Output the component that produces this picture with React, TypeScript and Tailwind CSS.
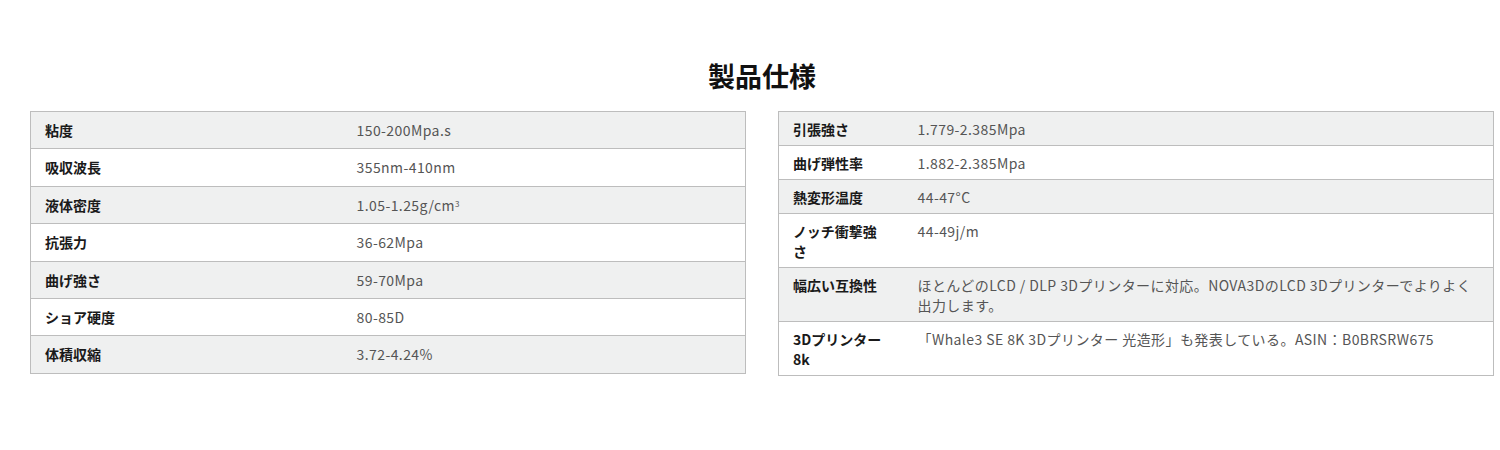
const font = { fontFamily: '"Noto Sans CJK JP", "Noto Sans", sans-serif' };

type Row = { label: string; value: React.ReactNode };

const leftRows: Row[] = [
  { label: '粘度', value: '150-200Mpa.s' },
  { label: '吸収波長', value: '355nm-410nm' },
  {
    label: '液体密度',
    value: (
      <>
        1.05-1.25g/cm<sup className="text-[8px]">3</sup>
      </>
    ),
  },
  { label: '抗張力', value: '36-62Mpa' },
  { label: '曲げ強さ', value: '59-70Mpa' },
  { label: 'ショア硬度', value: '80-85D' },
  { label: '体積収縮', value: '3.72-4.24%' },
];

const rightRows: Row[] = [
  { label: '引張強さ', value: '1.779-2.385Mpa' },
  { label: '曲げ弾性率', value: '1.882-2.385Mpa' },
  { label: '熱変形温度', value: '44-47°C' },
  { label: 'ノッチ衝撃強さ', value: '44-49j/m' },
  {
    label: '幅広い互換性',
    value: 'ほとんどのLCD / DLP 3Dプリンターに対応。NOVA3DのLCD 3Dプリンターでよりよく出力します。',
  },
  { label: '3Dプリンター8k', value: '「Whale3 SE 8K 3Dプリンター 光造形」も発表している。ASIN：B0BRSRW675' },
];

function SpecTable({ rows, labelWidth, cell }: { rows: Row[]; labelWidth: string; cell: string }) {
  return (
    <table className="w-full table-fixed border-collapse border border-[#bdbdbd] text-[14px]">
      <colgroup>
        <col className={labelWidth} />
        <col />
      </colgroup>
      <tbody>
        {rows.map((r, i) => (
          <tr key={r.label} className={`border-b border-[#bdbdbd] ${i % 2 === 0 ? 'bg-[#eff0f0]' : 'bg-white'}`}>
            <td className={`pl-[14px] pr-[16px] align-top font-bold text-[#1a1a1a] ${cell}`}>{r.label}</td>
            <td className={`pl-[14px] pr-[12px] align-top tracking-[0.03em] text-[#555] ${cell}`}>{r.value}</td>
          </tr>
        ))}
      </tbody>
    </table>
  );
}

export default function App() {
  return (
    <div className="min-h-[450px] bg-white pt-[56px]" style={font}>
      <div className="ml-[30px] w-[1464px]">
        <h2 className="mb-[15px] text-center text-[27px] font-bold leading-[40px] text-[#111]">製品仕様</h2>
        <div className="grid grid-cols-2 items-start gap-x-[32px]">
          <SpecTable rows={leftRows} labelWidth="w-[312px]" cell="py-[7px] leading-[22.4px]" />
          <SpecTable rows={rightRows} labelWidth="w-[125px]" cell="py-[6.5px] leading-[20px]" />
        </div>
      </div>
    </div>
  );
}
